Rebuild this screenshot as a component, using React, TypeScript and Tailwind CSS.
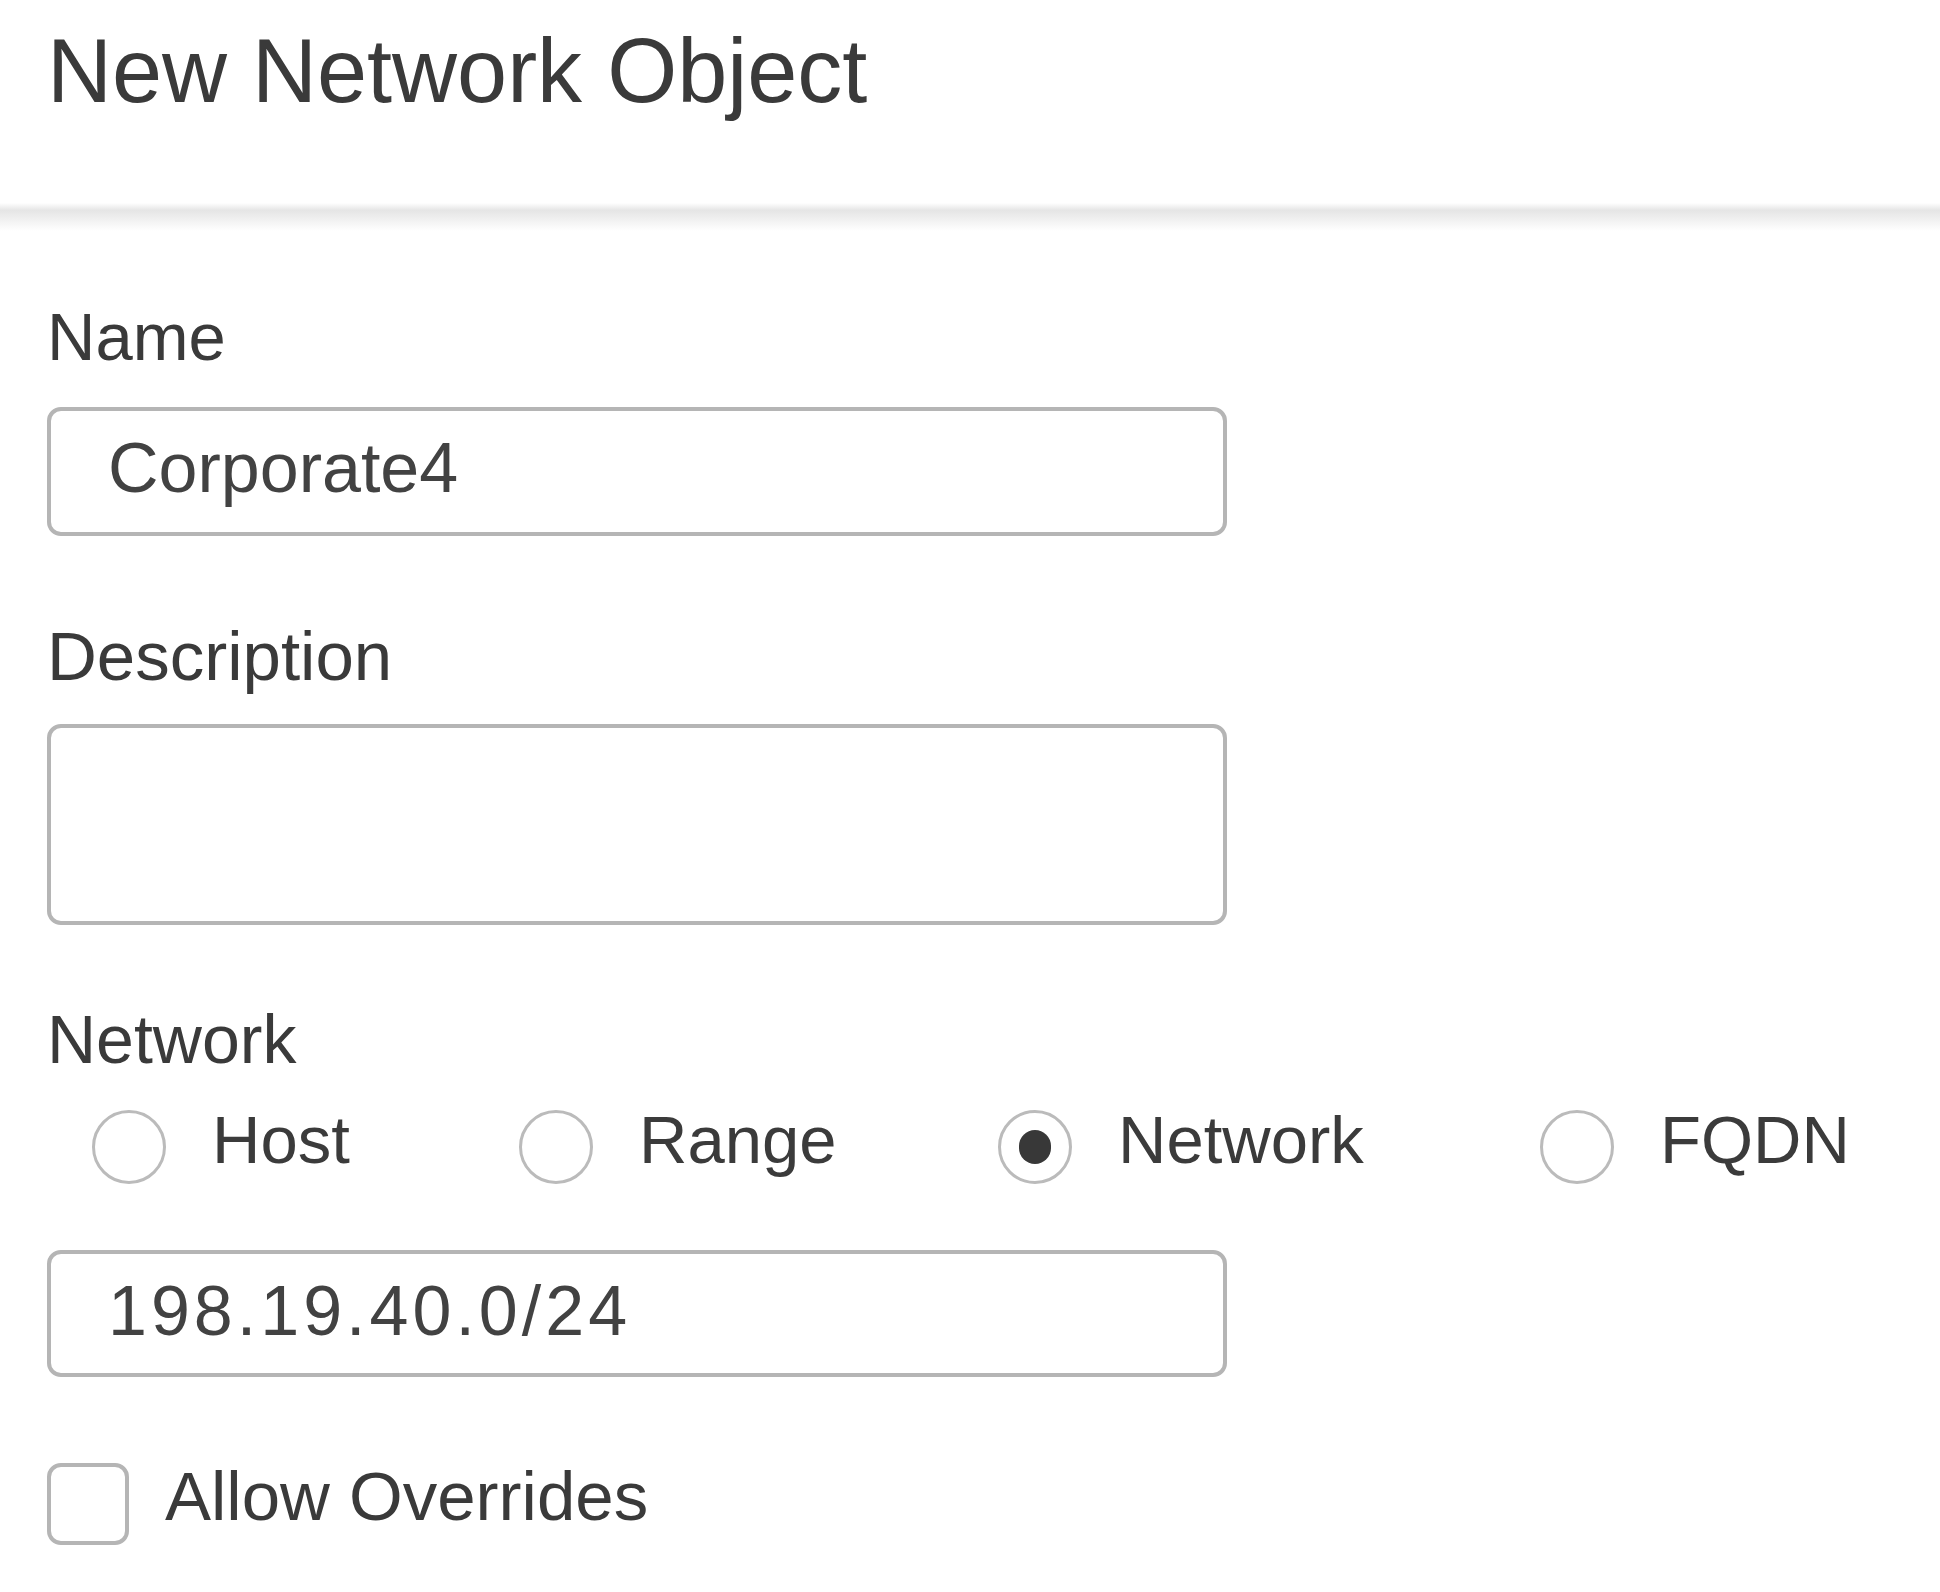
const font = { fontFamily: '"Liberation Sans", Arial, sans-serif' };

function Field({ value, height, tracking }: { value?: string; height: string; tracking?: string }) {
  return (
    <div
      className={`w-[1180px] ${height} border-[4px] border-[#b5b5b5] rounded-[14px] bg-white pl-[57px] pt-[23px] text-[70px] leading-[68px] text-[#424242] ${tracking ?? ""}`}
    >
      {value}
    </div>
  );
}

function Radio({ label, checked, width }: { label: string; checked?: boolean; width: string }) {
  return (
    <div className={`flex items-start ${width}`}>
      <div className="mt-[4px] w-[74px] h-[74px] rounded-full border-[3px] border-[#bbbbbb] bg-white flex items-center justify-center shrink-0">
        {checked && <div className="w-[32px] h-[34px] rounded-full bg-[#383838]" />}
      </div>
      <span className="ml-[46px] text-[67px] leading-[67px] text-[#3b3b3b]">{label}</span>
    </div>
  );
}

export default function App() {
  return (
    <div className="w-[1940px] h-[1592px] bg-white overflow-hidden" style={font}>
      {/* header */}
      <div className="pl-[47px] pt-[27px] pb-[88px]">
        <h1 className="text-[90px] leading-[88px] font-normal text-[#3a3a3a]">New Network Object</h1>
      </div>
      <div className="h-[28px] bg-[linear-gradient(to_bottom,#ffffff_0%,#e5e5e5_26%,#efefef_55%,#ffffff_100%)]" />

      <div className="pl-[47px] pt-[72px] flex flex-col text-[#3a3a3a]">
        <label className="text-[67px] leading-[67px]">Name</label>
        <div className="mt-[37px]">
          <Field value="Corporate4" height="h-[129px]" />
        </div>

        <label className="mt-[87px] text-[69px] leading-[67px]">Description</label>
        <div className="mt-[34px]">
          <Field height="h-[201px]" />
        </div>

        <label className="mt-[81px] text-[68px] leading-[67px]">Network</label>
        <div className="mt-[33px] flex pl-[45px]">
          <Radio label="Host" width="w-[427px]" />
          <Radio label="Range" width="w-[479px]" />
          <Radio label="Network" checked width="w-[542px]" />
          <Radio label="FQDN" width="w-auto" />
        </div>

        <div className="mt-[66px]">
          <Field value="198.19.40.0/24" height="h-[127px]" tracking="tracking-[4px]" />
        </div>

        <div className="mt-[86px] flex items-start">
          <div className="w-[82px] h-[82px] border-[4px] border-[#b5b5b5] rounded-[14px] bg-white shrink-0" />
          <span className="ml-[36px] text-[69px] leading-[67px]">Allow Overrides</span>
        </div>
      </div>
    </div>
  );
}
